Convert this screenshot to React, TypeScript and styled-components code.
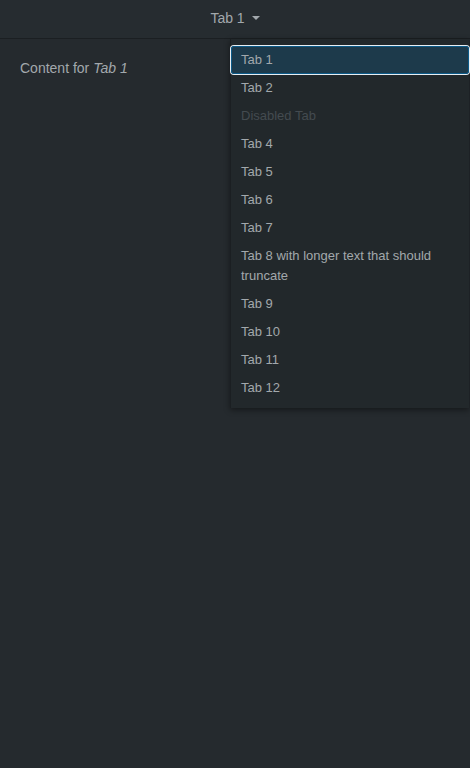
import React, { useState } from "react";
import styled, { createGlobalStyle } from "styled-components";

const GlobalStyle = createGlobalStyle`
  html, body {
    margin: 0;
    padding: 0;
    background: #252a2e;
    font-family: "Liberation Sans", Arial, sans-serif;
  }
`;

const tabs = [
  { label: "Tab 1" },
  { label: "Tab 2" },
  { label: "Disabled Tab", disabled: true },
  { label: "Tab 4" },
  { label: "Tab 5" },
  { label: "Tab 6" },
  { label: "Tab 7" },
  { label: "Tab 8 with longer text that should truncate" },
  { label: "Tab 9" },
  { label: "Tab 10" },
  { label: "Tab 11" },
  { label: "Tab 12" },
];

const Page = styled.div`
  position: relative;
  width: 470px;
  height: 768px;
  background: #252a2e;
  color: #a2a8ac;
`;

const Header = styled.div`
  height: 39px;
  box-sizing: border-box;
  padding-bottom: 3px;
  border-bottom: 1px solid #1b1f22;
  display: flex;
  align-items: center;
  justify-content: center;
  background: #262c30;
`;

const Trigger = styled.button`
  display: flex;
  align-items: center;
  gap: 7px;
  background: none;
  border: none;
  padding: 0;
  color: #a2a8ac;
  font-family: inherit;
  font-size: 14px;
  cursor: pointer;
`;

const Caret = styled.span`
  width: 0;
  height: 0;
  border-left: 4px solid transparent;
  border-right: 4px solid transparent;
  border-top: 4px solid #a2a8ac;
  margin-top: 1px;
`;

const Content = styled.div`
  padding: 21px 20px;
  font-size: 14px;
  line-height: 16px;
  color: #a2a8ac;

  em {
    font-style: italic;
  }
`;

const Menu = styled.div`
  position: absolute;
  top: 39px;
  left: 230px;
  width: 239px;
  box-sizing: border-box;
  padding: 7px 0 6px;
  background: #22282b;
  border-left: 1px solid #1b1f22;
  box-shadow: 0 2px 6px rgba(0, 0, 0, 0.45);
  display: flex;
  flex-direction: column;
`;

const Item = styled.div<{ $active?: boolean; $disabled?: boolean }>`
  padding: 4px 10px;
  font-size: 13px;
  line-height: 20px;
  border-radius: 3px;
  color: ${(p) => (p.$disabled ? "#444b50" : "#a2a8ac")};
  background: ${(p) => (p.$active ? "#1d3a4b" : "transparent")};
  box-shadow: ${(p) =>
    p.$active ? "inset 0 0 0 1px #0c5a88, 0 0 0 1px #e8eef2" : "none"};
  cursor: ${(p) => (p.$disabled ? "default" : "pointer")};
`;

export default function App() {
  const [active, setActive] = useState(0);
  return (
    <Page>
      <GlobalStyle />
      <Header>
        <Trigger>
          {tabs[active].label}
          <Caret />
        </Trigger>
      </Header>
      <Content>
        Content for <em>{tabs[active].label}</em>
      </Content>
      <Menu>
        {tabs.map((t, i) => (
          <Item
            key={t.label}
            $active={i === active}
            $disabled={t.disabled}
            onClick={() => !t.disabled && setActive(i)}
          >
            {t.label}
          </Item>
        ))}
      </Menu>
    </Page>
  );
}
